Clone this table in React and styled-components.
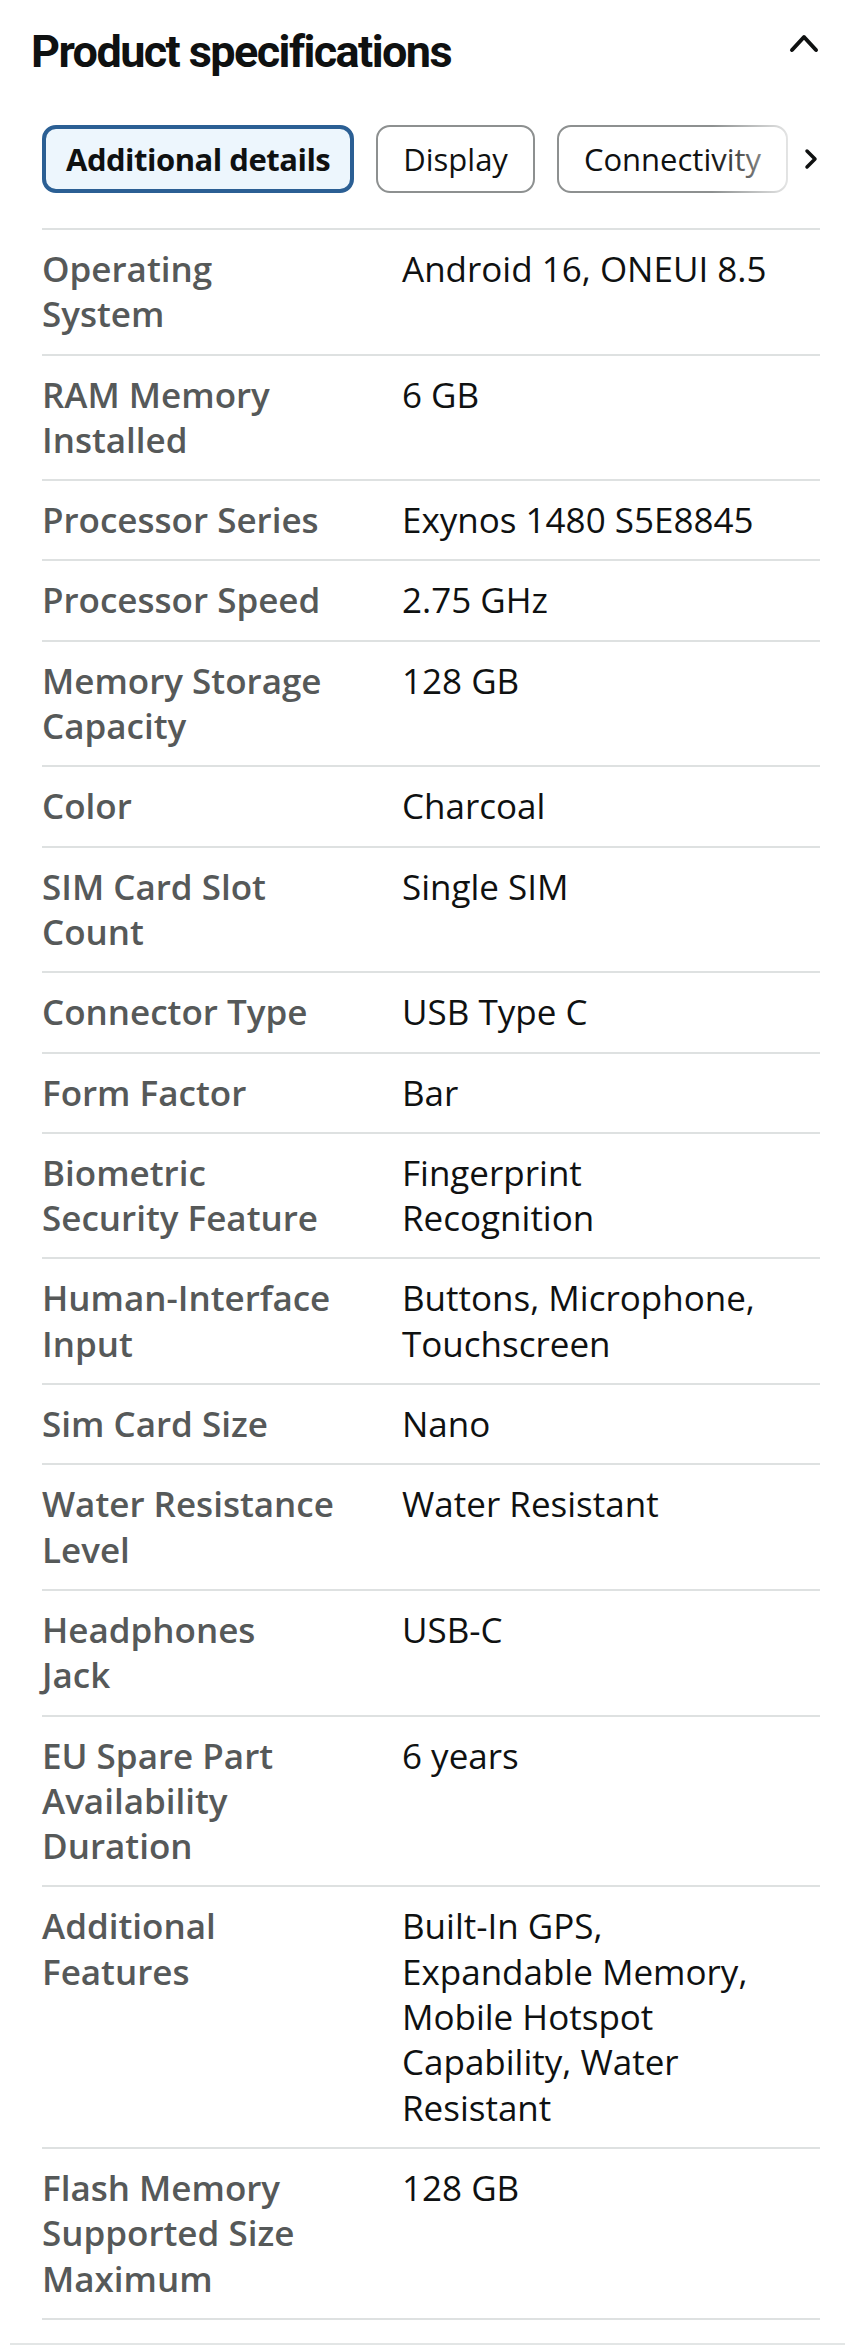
import React from "react";
import styled, { createGlobalStyle } from "styled-components";

const GlobalStyle = createGlobalStyle`
  html, body {
    margin: 0;
    padding: 0;
    background: #ffffff;
  }
  body {
    font-family: "Open Sans", "Noto Sans", sans-serif;
    color: #0f1111;
    -webkit-font-smoothing: antialiased;
  }
  * { box-sizing: border-box; }
`;

const Section = styled.section`
  margin: 0 5px 0 10px;
  padding-bottom: 23px;
  border-bottom: 2px solid #e3e6e6;
`;

const Header = styled.header`
  display: flex;
  justify-content: space-between;
  align-items: flex-start;
  padding: 26px 25px 0 21px;
`;

const Title = styled.h2`
  margin: 0;
  font-family: Roboto, "Liberation Sans", sans-serif;
  font-weight: 700;
  font-size: 45px;
  line-height: 52px;
  letter-spacing: -1.6px;
  color: #0f1111;
`;

const CollapseIcon = styled.svg`
  display: block;
  margin-top: 7px;
  flex-shrink: 0;
`;

const Body = styled.div`
  padding: 0 25px 0 32px;
`;

const TabBar = styled.div`
  position: relative;
  display: flex;
  align-items: center;
  margin-top: 47px;
`;

const TabTrack = styled.div`
  flex: 1;
  display: flex;
  gap: 22px;
  overflow: hidden;
`;

const Fade = styled.div`
  position: absolute;
  top: 0;
  bottom: 0;
  right: 28px;
  width: 80px;
  pointer-events: none;
  background: linear-gradient(
    to right,
    rgba(255, 255, 255, 0) 0%,
    rgba(255, 255, 255, 0.8) 100%
  );
`;

const Tab = styled.button`
  flex-shrink: 0;
  height: 68px;
  display: inline-flex;
  align-items: center;
  padding: 0 ${(p) => (p.$active ? 20 : 25)}px;
  border: ${(p) => (p.$active ? "4px solid #2b5f94" : "2px solid #8d9090")};
  border-radius: 14px;
  background: ${(p) => (p.$active ? "#edf6fd" : "#ffffff")};
  font-family: "Open Sans", "Noto Sans", sans-serif;
  font-size: 31px;
  font-weight: ${(p) => (p.$active ? 700 : 400)};
  letter-spacing: ${(p) => (p.$active ? "-0.5px" : "0")};
  color: #0f1111;
  white-space: nowrap;
  cursor: pointer;
`;

const ArrowButton = styled.div`
  flex: 0 0 28px;
  display: flex;
  align-items: center;
  justify-content: flex-end;
  height: 68px;
`;

const Table = styled.div`
  margin-top: 35px;
  border-top: 2px solid #dee1e1;
`;

const Row = styled.div`
  display: grid;
  grid-template-columns: 298px 1fr;
  column-gap: 62px;
  padding: 16px 40px 17px 0;
  border-bottom: 2px solid #dee1e1;
`;

const Label = styled.div`
  font-family: "Open Sans", "Noto Sans", sans-serif;
  font-weight: 600;
  font-size: 35px;
  line-height: 45.3px;
  color: #565959;
  white-space: pre-line;
`;

const Value = styled.div`
  font-family: "Open Sans", "Noto Sans", sans-serif;
  font-weight: 400;
  font-size: 35px;
  line-height: 45.3px;
  color: #0f1111;
`;

const specs = [
  ["Operating System", "Android 16, ONEUI 8.5"],
  ["RAM Memory Installed", "6 GB"],
  ["Processor Series", "Exynos 1480 S5E8845"],
  ["Processor Speed", "2.75 GHz"],
  ["Memory Storage Capacity", "128 GB"],
  ["Color", "Charcoal"],
  ["SIM Card Slot Count", "Single SIM"],
  ["Connector Type", "USB Type C"],
  ["Form Factor", "Bar"],
  ["Biometric Security Feature", "Fingerprint Recognition"],
  ["Human-Interface Input", "Buttons, Microphone, Touchscreen"],
  ["Sim Card Size", "Nano"],
  ["Water Resistance Level", "Water Resistant"],
  ["Headphones\nJack", "USB-C"],
  ["EU Spare Part Availability Duration", "6 years"],
  [
    "Additional Features",
    "Built-In GPS, Expandable Memory, Mobile Hotspot Capability, Water Resistant",
  ],
  ["Flash Memory Supported Size Maximum", "128 GB"],
];

const tabs = ["Additional details", "Display", "Connectivity"];

export default function App() {
  return (
    <>
      <GlobalStyle />
      <Section>
        <Header>
          <Title>Product specifications</Title>
          <CollapseIcon width="32" height="20" viewBox="0 0 32 20" aria-hidden="true">
            <polyline
              points="4,17 16,4 28,17"
              fill="none"
              stroke="#0f1111"
              strokeWidth="4"
              strokeLinecap="round"
              strokeLinejoin="round"
            />
          </CollapseIcon>
        </Header>
        <Body>
          <TabBar>
            <TabTrack>
              {tabs.map((t, i) => (
                <Tab key={t} $active={i === 0}>
                  {t}
                </Tab>
              ))}
            </TabTrack>
            <Fade />
            <ArrowButton>
              <svg width="18" height="22" viewBox="0 0 18 22" aria-hidden="true">
                <polyline
                  points="5,3 13,11 5,19"
                  fill="none"
                  stroke="#0f1111"
                  strokeWidth="3.5"
                  strokeLinecap="round"
                  strokeLinejoin="round"
                />
              </svg>
            </ArrowButton>
          </TabBar>
          <Table>
            {specs.map(([label, value]) => (
              <Row key={label}>
                <Label>{label}</Label>
                <Value>{value}</Value>
              </Row>
            ))}
          </Table>
        </Body>
      </Section>
    </>
  );
}
